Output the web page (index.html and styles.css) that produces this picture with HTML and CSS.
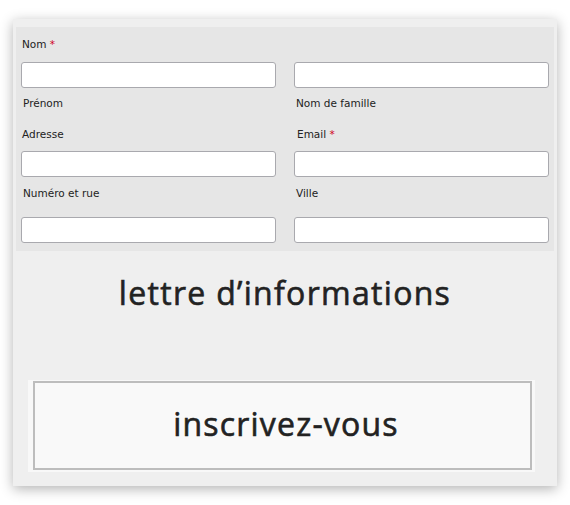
FILE: index.html
```html
<!DOCTYPE html>
<html lang="fr">
<head>
<meta charset="utf-8">
<title>Lettre d'informations</title>
<link rel="stylesheet" href="styles.css">
</head>
<body>
<div class="card">
  <form class="form">
    <div class="row row-label-1">
      <label class="label">Nom <span class="req">*</span></label>
      <span></span>
    </div>
    <div class="row row-input-1">
      <input class="field" type="text">
      <input class="field" type="text">
    </div>
    <div class="row row-sub-1">
      <span class="sub">Prénom</span>
      <span class="sub">Nom de famille</span>
    </div>
    <div class="row row-label-2">
      <label class="label">Adresse</label>
      <label class="label label-r">Email <span class="req">*</span></label>
    </div>
    <div class="row row-input-2">
      <input class="field" type="text">
      <input class="field" type="text">
    </div>
    <div class="row row-sub-2">
      <span class="sub">Numéro et rue</span>
      <span class="sub">Ville</span>
    </div>
    <div class="row row-input-3">
      <input class="field" type="text">
      <input class="field" type="text">
    </div>
  </form>
  <h2 class="title">lettre d’informations</h2>
  <div class="btn-wrap">
    <button class="btn" type="button">inscrivez-vous</button>
  </div>
</div>
</body>
</html>
```

FILE: styles.css
```css
html, body {
  margin: 0;
  padding: 0;
  background: #ffffff;
}

body {
  padding-bottom: 19px;
}

.card {
  margin: 19px 0 0 13px;
  width: 544px;
  height: 467px;
  box-sizing: border-box;
  background: #efefef;
  padding: 8px 3px 0;
  box-shadow: 0 3px 12px rgba(0, 0, 0, 0.3);
}

.form {
  background: #e6e6e6;
  padding: 9px 5px 8px;
  margin: 0;
  font-family: "DejaVu Sans", Verdana, sans-serif;
  font-size: 10.5px;
  color: #333;
}

.row {
  display: grid;
  grid-template-columns: 255px 255px;
  column-gap: 18px;
}

.label, .sub {
  display: block;
  line-height: 16px;
  height: 16px;
  padding-left: 1px;
  color: #222;
}

.label-r {
  padding-left: 3px;
}

.sub {
  padding-left: 2px;
}

.req {
  color: #d0021b;
}

.field {
  display: block;
  box-sizing: border-box;
  width: 100%;
  height: 26px;
  margin: 0;
  border: 1px solid #a9a9ae;
  border-radius: 3px;
  background: #fff;
}

.row-input-1 { margin-top: 10px; }
.row-sub-1 { margin-top: 7px; }
.row-label-2 { margin-top: 15px; }
.row-input-2 { margin-top: 9px; }
.row-sub-2 { margin-top: 8px; }
.row-input-3 { margin-top: 16px; }

.title {
  margin: 24px 0 0;
  text-align: center;
  font-family: "Open Sans", sans-serif;
  font-weight: 400;
  font-size: 32px;
  line-height: 36px;
  color: #222;
  letter-spacing: 1.3px;
  -webkit-text-stroke: 0.6px #222;
}

.btn-wrap {
  margin: 69px 19px 0 12px;
  background: #f8f8f8;
  padding: 1px 3px 2px 5px;
}

.btn {
  display: block;
  width: 100%;
  height: 89px;
  box-sizing: border-box;
  border: 2px solid #bdbdbd;
  background: #f9f9f9;
  font-family: "Open Sans", sans-serif;
  font-weight: 400;
  font-size: 32px;
  color: #222;
  letter-spacing: 1.2px;
  -webkit-text-stroke: 0.6px #222;
  padding: 0 0 4px 7px;
}
```
